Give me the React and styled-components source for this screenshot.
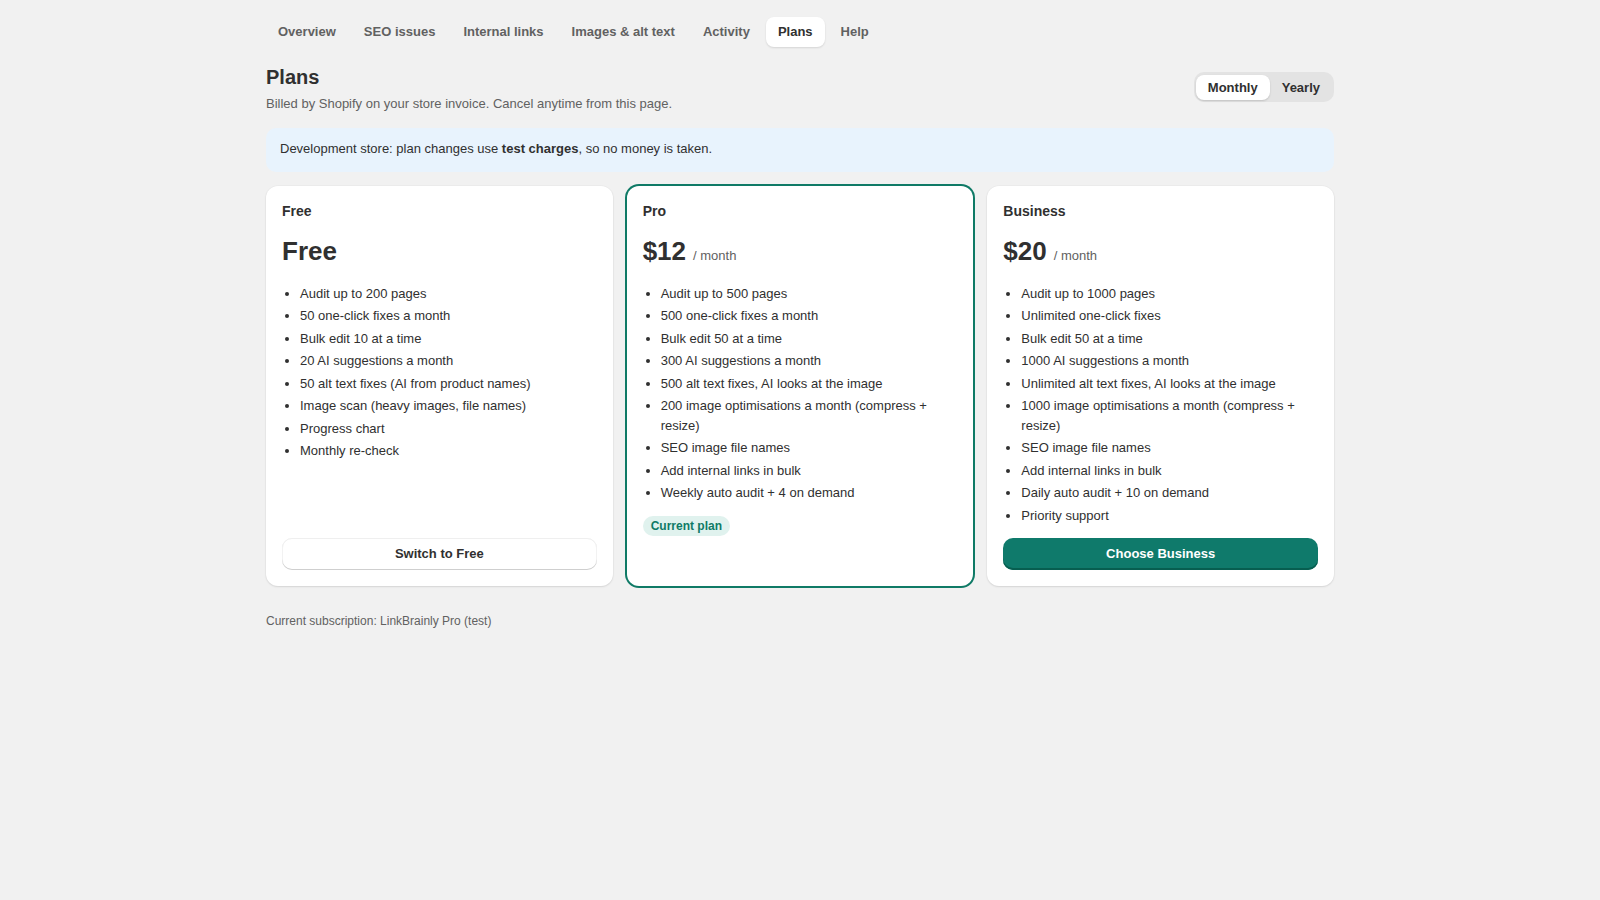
import React from "react";
import styled, { createGlobalStyle } from "styled-components";

const tabs = ["Overview", "SEO issues", "Internal links", "Images & alt text", "Activity", "Plans", "Help"];

const plans = [
  {
    name: "Free",
    price: "Free",
    features: [
      "Audit up to 200 pages",
      "50 one-click fixes a month",
      "Bulk edit 10 at a time",
      "20 AI suggestions a month",
      "50 alt text fixes (AI from product names)",
      "Image scan (heavy images, file names)",
      "Progress chart",
      "Monthly re-check",
    ],
    action: "Switch to Free",
  },
  {
    name: "Pro",
    price: "$12",
    per: "/ month",
    current: true,
    features: [
      "Audit up to 500 pages",
      "500 one-click fixes a month",
      "Bulk edit 50 at a time",
      "300 AI suggestions a month",
      "500 alt text fixes, AI looks at the image",
      "200 image optimisations a month (compress + resize)",
      "SEO image file names",
      "Add internal links in bulk",
      "Weekly auto audit + 4 on demand",
    ],
  },
  {
    name: "Business",
    price: "$20",
    per: "/ month",
    primary: true,
    features: [
      "Audit up to 1000 pages",
      "Unlimited one-click fixes",
      "Bulk edit 50 at a time",
      "1000 AI suggestions a month",
      "Unlimited alt text fixes, AI looks at the image",
      "1000 image optimisations a month (compress + resize)",
      "SEO image file names",
      "Add internal links in bulk",
      "Daily auto audit + 10 on demand",
      "Priority support",
    ],
    action: "Choose Business",
  },
];

export default function App() {
  return (
    <>
      <GlobalStyle />
      <Page>
        <Tabs>
          {tabs.map((t) => (
            <Tab key={t} $active={t === "Plans"}>{t}</Tab>
          ))}
        </Tabs>
        <Header>
          <div>
            <Title>Plans</Title>
            <Subtitle>Billed by Shopify on your store invoice. Cancel anytime from this page.</Subtitle>
          </div>
          <Toggle>
            <ToggleButton $active>Monthly</ToggleButton>
            <ToggleButton>Yearly</ToggleButton>
          </Toggle>
        </Header>
        <Banner>
          Development store: plan changes use <strong>test charges</strong>, so no money is taken.
        </Banner>
        <Grid>
          {plans.map((p) => (
            <Card key={p.name} $current={p.current}>
              <PlanName>{p.name}</PlanName>
              <PriceRow>
                <Price>{p.price}</Price>
                {p.per && <Per>{p.per}</Per>}
              </PriceRow>
              <Features>
                {p.features.map((f) => (
                  <li key={f}>{f}</li>
                ))}
              </Features>
              {p.current && <Badge>Current plan</Badge>}
              {p.action && <Action $primary={p.primary}>{p.action}</Action>}
            </Card>
          ))}
        </Grid>
        <Footnote>Current subscription: LinkBrainly Pro (test)</Footnote>
      </Page>
    </>
  );
}

const GlobalStyle = createGlobalStyle`
  body {
    margin: 0;
    min-height: 100vh;
    background: #f1f1f1;
    color: #303030;
    font-family: "Liberation Sans", Arial, sans-serif;
    font-size: 13px;
    line-height: 20px;
  }
`;

const Page = styled.div`
  width: 1068px;
  margin: 0 auto;
  padding-top: 17px;
`;

const Tabs = styled.nav`
  display: flex;
  gap: 4px;
`;

const Tab = styled.button`
  border: 0;
  height: 30px;
  padding: 0 12px;
  border-radius: 8px;
  font: 700 13px/20px "Liberation Sans", Arial, sans-serif;
  background: ${(p) => (p.$active ? "#fff" : "transparent")};
  color: ${(p) => (p.$active ? "#303030" : "#616161")};
  box-shadow: ${(p) => (p.$active ? "0 1px 2px rgba(0,0,0,.12)" : "none")};
`;

const Header = styled.div`
  display: flex;
  justify-content: space-between;
  align-items: flex-start;
  margin-top: 17px;
`;

const Title = styled.h1`
  margin: 0;
  font-size: 20px;
  line-height: 26px;
  font-weight: 700;
  color: #303030;
`;

const Subtitle = styled.p`
  margin: 4px 0 0;
  color: #616161;
`;

const Toggle = styled.div`
  display: flex;
  margin-top: 8px;
  padding: 3px 2px 2px;
  border-radius: 10px;
  background: #e3e3e3;
`;

const ToggleButton = styled.button`
  border: 0;
  height: 25px;
  padding: 0 12px;
  border-radius: 8px;
  font: 700 13px/20px "Liberation Sans", Arial, sans-serif;
  color: #303030;
  background: ${(p) => (p.$active ? "#fff" : "transparent")};
  box-shadow: ${(p) => (p.$active ? "0 1px 2px rgba(0,0,0,.15)" : "none")};
`;

const Banner = styled.div`
  margin-top: 14px;
  height: 44px;
  box-sizing: border-box;
  padding: 0 14px 2px;
  display: flex;
  align-items: center;
  white-space: pre-wrap;
  border-radius: 10px;
  background: #e8f3fd;

  strong {
    font-weight: 700;
  }
`;

const Grid = styled.div`
  display: grid;
  grid-template-columns: repeat(3, 1fr);
  gap: 14px;
  margin-top: 14px;
`;

const Card = styled.section`
  display: flex;
  flex-direction: column;
  align-items: flex-start;
  padding: 15px 16px 16px;
  border-radius: 12px;
  background: #fff;
  box-shadow: ${(p) =>
    p.$current
      ? "0 0 0 2px #0f7a66"
      : "0 0 0 1px rgba(0,0,0,.02), 0 1px 2px rgba(0,0,0,.1)"};
`;

const PlanName = styled.h2`
  margin: 0;
  font-size: 14px;
  line-height: 20px;
  font-weight: 700;
`;

const PriceRow = styled.div`
  display: flex;
  align-items: baseline;
  gap: 7px;
  margin-top: 14px;
`;

const Price = styled.span`
  font-size: 26px;
  line-height: 32px;
  font-weight: 700;
`;

const Per = styled.span`
  color: #616161;
`;

const Features = styled.ul`
  margin: 16.9px 0 12.6px;
  padding: 0 0 0 18px;
  line-height: 19.5px;

  li {
    margin-bottom: 3px;
  }
  li:last-child {
    margin-bottom: 0;
  }
`;

const Badge = styled.span`
  margin-top: 0.5px;
  height: 20px;
  padding: 0 8px;
  border-radius: 10px;
  font-size: 12px;
  line-height: 20px;
  font-weight: 700;
  color: #0f7a66;
  background: #e0f2ee;
`;

const Action = styled.button`
  width: 100%;
  height: 32px;
  margin-top: auto;
  border: 0;
  border-radius: 10px;
  font: 700 13px/20px "Liberation Sans", Arial, sans-serif;
  color: ${(p) => (p.$primary ? "#fff" : "#303030")};
  background: ${(p) => (p.$primary ? "#0f7a6b" : "#fff")};
  box-shadow: ${(p) =>
    p.$primary
      ? "inset 0 -2px 0 #075e50"
      : "inset 0 1px 0 #efefef, inset 0 -1px 0 #cfcfcf, inset 1px 0 0 #f2f2f2, inset -1px 0 0 #f2f2f2"};
`;

const Footnote = styled.p`
  margin: 25px 0 0;
  font-size: 12px;
  line-height: 20px;
  color: #616161;
`;
